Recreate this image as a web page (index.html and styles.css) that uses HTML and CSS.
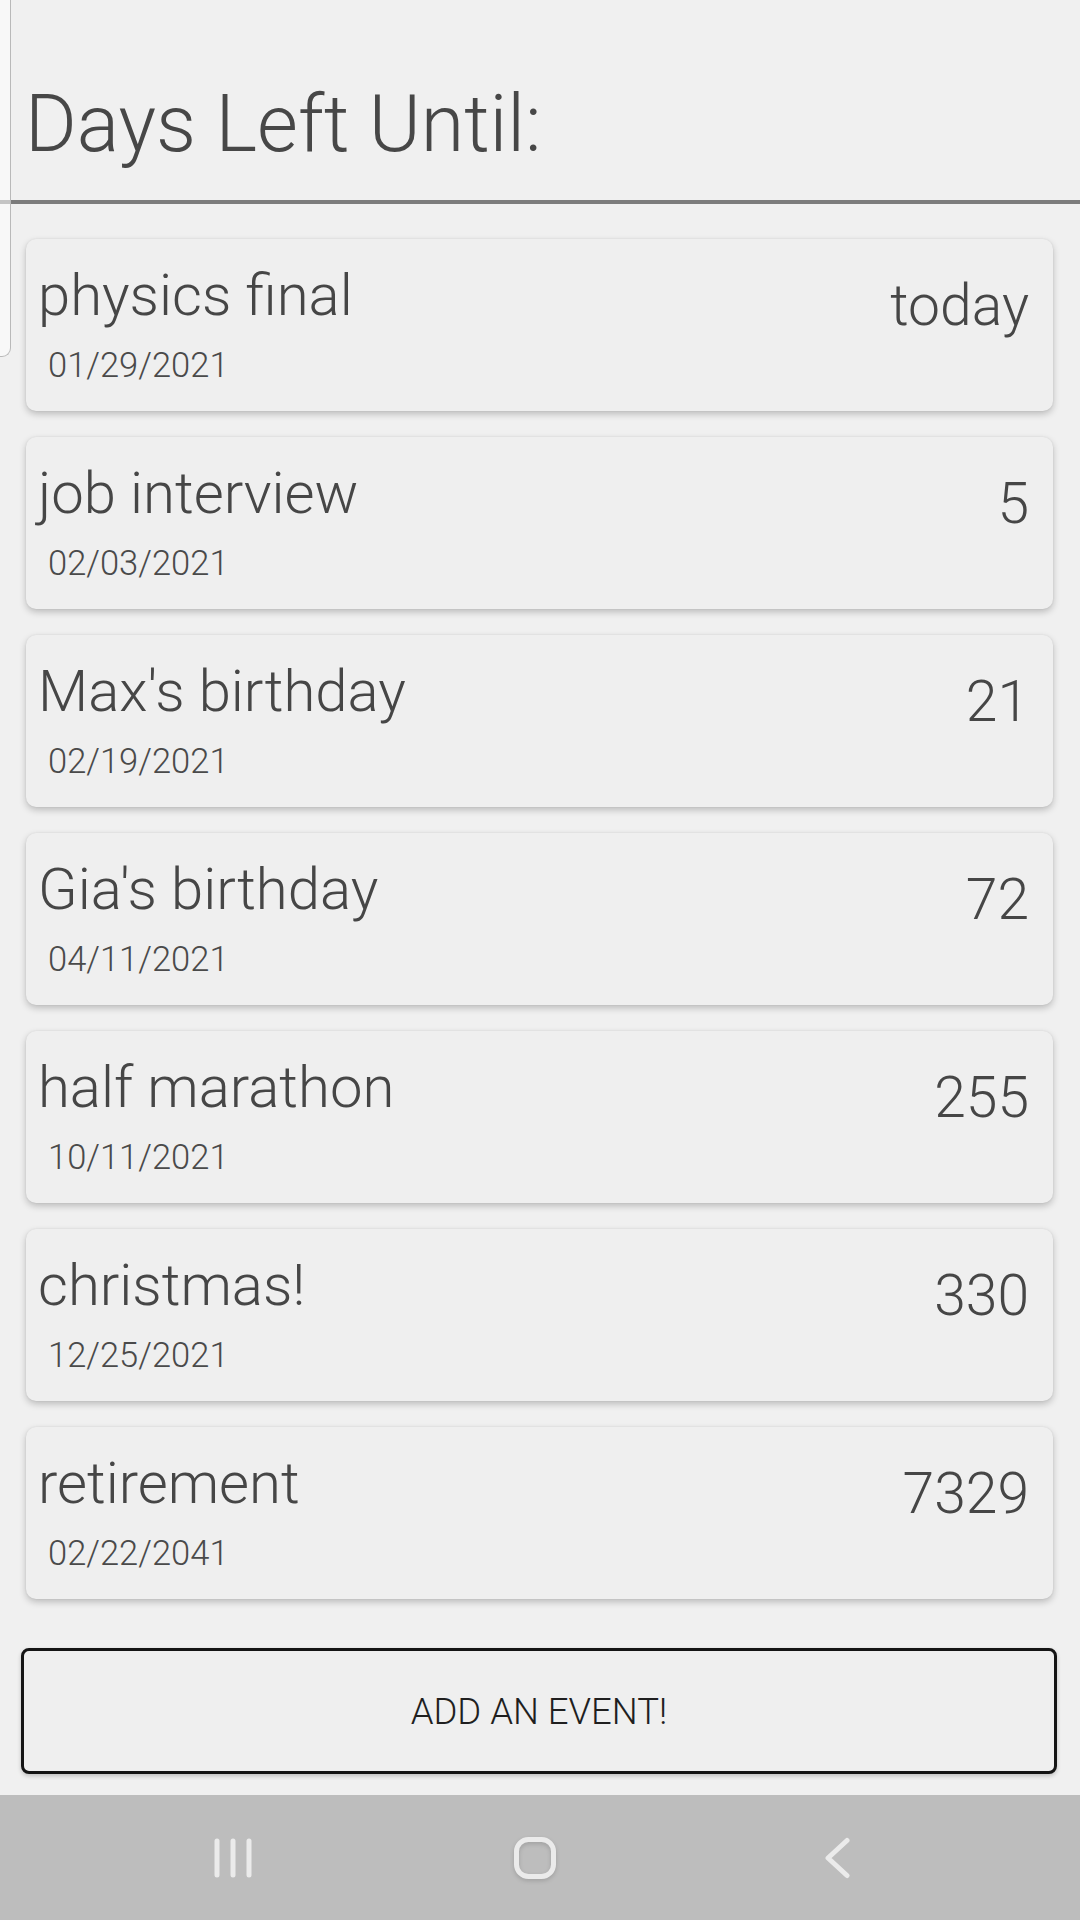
FILE: index.html
```html
<!DOCTYPE html>
<html lang="en">
<head>
<meta charset="utf-8">
<title>Days Left Until</title>
<link rel="stylesheet" href="styles.css">
</head>
<body>
<div class="screen">
  <div class="drawer-edge"></div>
  <header class="header">
    <h1 class="title">Days Left Until:</h1>
  </header>
  <div class="divider"></div>
  <main class="list">
    <div class="card">
      <div class="info"><div class="name">physics final</div><div class="date">01/29/2021</div></div>
      <div class="count">today</div>
    </div>
    <div class="card">
      <div class="info"><div class="name">job interview</div><div class="date">02/03/2021</div></div>
      <div class="count">5</div>
    </div>
    <div class="card">
      <div class="info"><div class="name">Max's birthday</div><div class="date">02/19/2021</div></div>
      <div class="count">21</div>
    </div>
    <div class="card">
      <div class="info"><div class="name">Gia's birthday</div><div class="date">04/11/2021</div></div>
      <div class="count">72</div>
    </div>
    <div class="card">
      <div class="info"><div class="name">half marathon</div><div class="date">10/11/2021</div></div>
      <div class="count">255</div>
    </div>
    <div class="card">
      <div class="info"><div class="name">christmas!</div><div class="date">12/25/2021</div></div>
      <div class="count">330</div>
    </div>
    <div class="card">
      <div class="info"><div class="name">retirement</div><div class="date">02/22/2041</div></div>
      <div class="count">7329</div>
    </div>
  </main>
  <button class="add">ADD AN EVENT!</button>
  <nav class="navbar">
    <div class="nav-slot">
      <svg class="nav-icon" width="40" height="42" viewBox="0 0 40 42"><g stroke="#ebebeb" stroke-width="5" stroke-linecap="round" fill="none"><line x1="4" y1="4" x2="4" y2="38"/><line x1="20" y1="4" x2="20" y2="38"/><line x1="36" y1="4" x2="36" y2="38"/></g></svg>
    </div>
    <div class="nav-slot">
      <svg class="nav-icon home" width="44" height="44" viewBox="0 0 44 44"><rect x="3.5" y="3.5" width="37" height="37" rx="12" ry="12" stroke="#ebebeb" stroke-width="5" fill="none"/></svg>
    </div>
    <div class="nav-slot">
      <svg class="nav-icon" width="28" height="42" viewBox="0 0 28 42"><polyline points="24,3.5 5,21 24,38.5" stroke="#ebebeb" stroke-width="5" stroke-linecap="round" stroke-linejoin="round" fill="none"/></svg>
    </div>
  </nav>
</div>
</body>
</html>
```
FILE: styles.css
```css
html, body {
  margin: 0;
  padding: 0;
}
body {
  background: #f0f0f0;
  font-family: Roboto, "Liberation Sans", sans-serif;
  font-weight: 300;
  color: #464646;
}
.screen {
  position: relative;
  width: 1080px;
  height: 1920px;
  display: flex;
  flex-direction: column;
  overflow: hidden;
}
.drawer-edge {
  position: absolute;
  left: 0;
  top: 0;
  width: 10px;
  height: 356px;
  background: rgba(255, 255, 255, 0.55);
  border-right: 1px solid #b9b9b9;
  border-bottom: 1px solid #b9b9b9;
  border-bottom-right-radius: 9px;
  z-index: 2;
}
.header {
  padding: 80px 0 0 25px;
}
.title {
  margin: 0;
  font-size: 79px;
  line-height: 89px;
  font-weight: 300;
  color: #474747;
}
.divider {
  margin-top: 31px;
  height: 4px;
  background: #7c7c7c;
}
.list {
  display: flex;
  flex-direction: column;
  gap: 26px;
  padding: 35px 27px 0 26px;
}
.card {
  display: flex;
  justify-content: space-between;
  align-items: flex-start;
  height: 172px;
  box-sizing: border-box;
  padding: 23px 24px 26px 12px;
  background: #efefef;
  border-radius: 10px;
  box-shadow: 0 3px 7px rgba(0, 0, 0, 0.22), 0 0 2px rgba(0, 0, 0, 0.08);
}
.info {
  display: flex;
  flex-direction: column;
  gap: 17px;
}
.name {
  font-size: 58px;
  line-height: 67px;
  white-space: nowrap;
}
.date {
  font-size: 34.5px;
  line-height: 39px;
  padding-left: 10px;
  color: #4a4a4a;
}
.count {
  font-size: 57px;
  line-height: 67px;
  margin-top: 10px;
  white-space: nowrap;
}
.add {
  margin: 49px 23px 0 21px;
  height: 126px;
  box-sizing: border-box;
  border: 3px solid #151515;
  border-radius: 8px;
  background: #efefef;
  font-family: Roboto, "Liberation Sans", sans-serif;
  font-weight: 300;
  font-size: 36.5px;
  color: #1f1f1f;
  padding: 0;
  box-shadow: 0 2px 4px rgba(0, 0, 0, 0.2);
}
.navbar {
  margin-top: auto;
  height: 125px;
  background: #bdbdbd;
  display: grid;
  grid-template-columns: repeat(3, 302px);
  justify-content: start;
  padding-left: 82px;
  align-items: center;
}
.nav-slot {
  display: flex;
  justify-content: center;
  align-items: center;
}
.home {
  filter: drop-shadow(0 2px 2px rgba(0, 0, 0, 0.15));
}
```
